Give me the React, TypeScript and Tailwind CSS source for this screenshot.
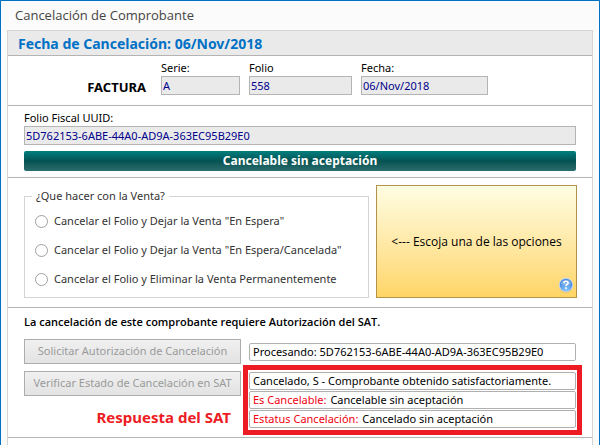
import type { ReactNode } from "react";

const options = [
  { id: "espera", label: 'Cancelar el Folio y Dejar la Venta "En Espera"' },
  { id: "cancelada", label: 'Cancelar el Folio y Dejar la Venta "En Espera/Cancelada"' },
  { id: "eliminar", label: "Cancelar el Folio y Eliminar la Venta Permanentemente" },
];

function Field({ id, label, value, className }: { id: string; label: string; value: string; className?: string }) {
  return (
    <div className={className}>
      <label htmlFor={id} className="block h-4 leading-4">
        {label}
      </label>
      <input
        id={id}
        readOnly
        defaultValue={value}
        className="block h-[19px] w-full border border-[#b4b4b4] bg-[#eaeaea] px-px text-[#00008b] outline-none"
      />
    </div>
  );
}

function StatusLine({ label, children }: { label?: string; children: ReactNode }) {
  return (
    <p className="h-[18px] rounded-xs border border-[#b0b0b0] bg-white px-[3px] leading-4 whitespace-nowrap">
      {label && <span className="mr-1 text-[#f00010]">{label}</span>}
      {children}
    </p>
  );
}

function ActionButton({ children }: { children: ReactNode }) {
  return (
    <button
      type="button"
      disabled
      className="h-[25px] w-full border border-[#adadad] bg-linear-to-b from-[#f0f0f0] to-[#e3e3e3] whitespace-nowrap text-[#9a9a9a]"
    >
      {children}
    </button>
  );
}

function HelpIcon() {
  return (
    <svg viewBox="0 0 16 16" className="size-4" aria-hidden="true">
      <defs>
        <radialGradient id="help-fill" cx="50%" cy="85%" r="75%">
          <stop offset="0" stopColor="#8cc8fa" />
          <stop offset="1" stopColor="#3a7fdc" />
        </radialGradient>
      </defs>
      <circle cx="8" cy="8.6" r="7.2" fill="#a98f4a" opacity="0.4" />
      <circle cx="8" cy="8" r="7.2" fill="#c9dcf2" />
      <circle cx="8" cy="8" r="6.2" fill="url(#help-fill)" />
      <path d="M2.6 7a5.5 5.5 0 0 1 10.8 0Q8 9 2.6 7Z" fill="#fff" opacity="0.25" />
      <path
        d="M5.9 6.3C5.9 4.9 6.8 4.2 8 4.2s2.1.7 2.1 1.8C10.1 7.4 8 7.5 8 9.1"
        fill="none"
        stroke="#fff"
        strokeWidth="1.6"
      />
      <rect x="7.2" y="10.3" width="1.6" height="1.6" fill="#fff" />
    </svg>
  );
}

export default function App() {
  return (
    <div className="flex min-h-screen flex-col border-x border-t border-[#0071c5] bg-[#fbfbfb] px-[6px] font-['Noto_Sans','Open_Sans',sans-serif] text-[11px] text-black">
      <h1 className="h-[29px] px-2 font-['Open_Sans',sans-serif] text-[13px] leading-[29px] text-[#444]">
        Cancelación de Comprobante
      </h1>

      <main className="flex-1 border-x border-t border-[#d4d4d4] bg-white">
        <h2 className="h-[25px] border-b border-[#b4b4b4] bg-[#eaeaea] px-[10px] text-sm leading-[25px] font-bold text-[#0071c5]">
          Fecha de Cancelación: 06/Nov/2018
        </h2>

        <section className="flex items-end gap-[9px] border-b border-[#b4b4b4] px-4 pt-1 pb-[10px]">
          <strong className="w-[122px] shrink-0 text-right text-[13px] leading-4">FACTURA</strong>
          <Field id="serie" label="Serie:" value="A" className="ml-[6px] w-[79px]" />
          <Field id="folio" label="Folio" value="558" className="w-[103px]" />
          <Field id="fecha" label="Fecha:" value="06/Nov/2018" className="w-[127px]" />
        </section>

        <section className="border-b border-[#b4b4b4] px-4 pt-1 pb-[6px]">
          <Field id="uuid" label="Folio Fiscal UUID:" value="5D762153-6ABE-44A0-AD9A-363EC95B29E0" />
          <p className="mt-[6px] h-5 rounded-xs bg-linear-to-b from-[#008080] via-[#045252] to-[#2a6e6e] text-center text-xs leading-5 font-bold text-white">
            Cancelable sin aceptación
          </p>
        </section>

        <section className="flex items-end gap-[7px] border-b border-[#b4b4b4] pt-[7px] pr-[15px] pb-[9px] pl-4">
          <fieldset className="min-w-0 flex-1 border border-[#d4d4d4] px-[7px] pb-[10px] text-[#333]">
            <legend className="px-1 leading-4">¿Que hacer con la Venta?</legend>
            <div className="flex flex-col gap-[13px] pt-[9px] pl-[3px]">
              {options.map((option) => (
                <label key={option.id} className="flex items-center gap-[6px] leading-4 whitespace-nowrap">
                  <input
                    type="radio"
                    name="venta"
                    value={option.id}
                    className="size-[13px] shrink-0 appearance-none rounded-full border border-[#a0a0a0] bg-white checked:border-4"
                  />
                  {option.label}
                </label>
              ))}
            </div>
          </fieldset>
          <div className="relative flex h-[113px] w-[201px] shrink-0 items-center justify-center border border-[#b3924a] bg-linear-to-b from-[#fffde2] to-[#ffd564] font-['Open_Sans',sans-serif] text-xs">
            {"<--- Escoja una de las opciones"}
            <button type="button" aria-label="Ayuda" className="absolute right-[2px] bottom-1">
              <HelpIcon />
            </button>
          </div>
        </section>

        <section className="border-b border-[#b4b4b4] pt-[6px] pr-[10px] pb-[2px] pl-4">
          <p className="font-['Open_Sans',sans-serif] leading-4 font-semibold">
            La cancelación de este comprobante requiere Autorización del SAT.
          </p>
          <div className="mt-[9px] flex gap-[2px]">
            <div className="flex w-[217px] shrink-0 flex-col gap-[7px]">
              <ActionButton>Solicitar Autorización de Cancelación</ActionButton>
              <ActionButton>Verificar Estado de Cancelación en SAT</ActionButton>
              <strong className="mt-1 pr-[10px] text-right text-[15px] leading-5 text-[#ed1c24]">
                Respuesta del SAT
              </strong>
            </div>
            <div className="min-w-0 flex-1 pt-1">
              <div className="px-[6px]">
                <StatusLine>Procesando: 5D762153-6ABE-44A0-AD9A-363EC95B29E0</StatusLine>
              </div>
              <div className="mt-1 flex flex-col gap-px border-5 border-[#ed1c24] px-px py-[2px]">
                <StatusLine>Cancelado, S - Comprobante obtenido satisfactoriamente.</StatusLine>
                <StatusLine label="Es Cancelable:">Cancelable sin aceptación</StatusLine>
                <StatusLine label="Estatus Cancelación:">Cancelado sin aceptación</StatusLine>
              </div>
            </div>
          </div>
        </section>
      </main>
    </div>
  );
}
